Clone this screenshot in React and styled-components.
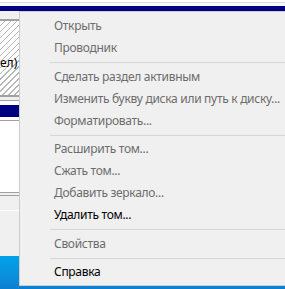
import React from "react";
import styled, { createGlobalStyle } from "styled-components";

const Global = createGlobalStyle`
  html, body { margin: 0; padding: 0; }
  body { width: 285px; height: 289px; overflow: hidden; background: #f0f0f0; }
`;

const Page = styled.div`
  position: relative;
  width: 285px;
  height: 289px;
  overflow: hidden;
  display: flex;
  flex-direction: column;
  font-family: "Noto Sans", "Open Sans", sans-serif;
`;

const Band = styled.div`
  flex: 0 0 ${(p) => p.$h}px;
  background: ${(p) => p.$bg};
`;

const Hatched = styled.div`
  flex: 0 0 74px;
  background-color: #fff;
  background-image: repeating-linear-gradient(
    135deg,
    transparent 0px,
    transparent 3.2px,
    #b8b8b8 3.2px,
    #b8b8b8 4.2px
  );
  display: flex;
  align-items: flex-start;
`;

const CutLabel = styled.span`
  margin-top: 34px;
  white-space: nowrap;
  font-size: 12px;
  line-height: 16px;
  color: #000;
`;

const Desktop = styled.div`
  flex: 1 1 auto;
  background: linear-gradient(180deg, #00a3ea 0%, #0a8fdc 60%, #0a7fcf 100%);
`;

const Menu = styled.div`
  position: absolute;
  left: 19px;
  top: 11px;
  right: -20px;
  bottom: 3px;
  background: #f0f0f0;
  border: 1px solid #cccccc;
  padding: 2px 0 3px;
  display: flex;
  flex-direction: column;
  font-family: "Noto Sans", "Open Sans", sans-serif;
  font-size: 12px;
  letter-spacing: -0.3px;
`;

const Item = styled.div`
  height: 22px;
  box-sizing: border-box;
  padding-top: 1px;
  line-height: 21px;
  padding-left: 34px;
  white-space: nowrap;
  color: ${(p) => (p.$enabled ? "#000000" : "#6d6d6d")};
`;

const Separator = styled.div`
  height: 7px;
  margin-left: 30px;
  box-sizing: border-box;
  padding-top: 4px;
  &::before {
    content: "";
    display: block;
    height: 1px;
    background: #d7d7d7;
  }
`;

const groups = [
  [["Открыть"], ["Проводник"]],
  [
    ["Сделать раздел активным"],
    ["Изменить букву диска или путь к диску..."],
    ["Форматировать..."],
  ],
  [
    ["Расширить том..."],
    ["Сжать том..."],
    ["Добавить зеркало..."],
    ["Удалить том...", true],
  ],
  [["Свойства"]],
  [["Справка", true]],
];

export default function App() {
  return (
    <>
      <Global />
      <Page>
        <Band $h={2} $bg="#ffffff" />
        <Band $h={1} $bg="#d9d9d9" />
        <Band $h={3} $bg="#f7f7f7" />
        <Band $h={5} $bg="#000080" />
        <Band $h={8} $bg="#f0f0f0" />
        <Band $h={2} $bg="#a0a0a0" />
        <Hatched>
          <CutLabel>ел)</CutLabel>
        </Hatched>
        <Band $h={2} $bg="#a0a0a0" />
        <Band $h={3} $bg="#f0f0f0" />
        <Band $h={1} $bg="#a0a0a0" />
        <Band $h={4} $bg="#ffffff" />
        <Band $h={12} $bg="#000080" />
        <Band $h={3} $bg="#ffffff" />
        <Band $h={1} $bg="#a0a0a0" />
        <Band $h={71} $bg="#ffffff" />
        <Band $h={1} $bg="#a0a0a0" />
        <Band $h={2} $bg="#f0f0f0" />
        <Band $h={1} $bg="#a0a0a0" />
        <Band $h={14} $bg="#f0f0f0" />
        <Band $h={1} $bg="#ffffff" />
        <Band $h={45} $bg="#f0f0f0" />
        <Desktop />
        <Menu>
          {groups.map((g, gi) => (
            <React.Fragment key={gi}>
              {gi > 0 && <Separator />}
              {g.map(([label, enabled]) => (
                <Item key={label} $enabled={enabled}>
                  {label}
                </Item>
              ))}
            </React.Fragment>
          ))}
        </Menu>
      </Page>
    </>
  );
}
